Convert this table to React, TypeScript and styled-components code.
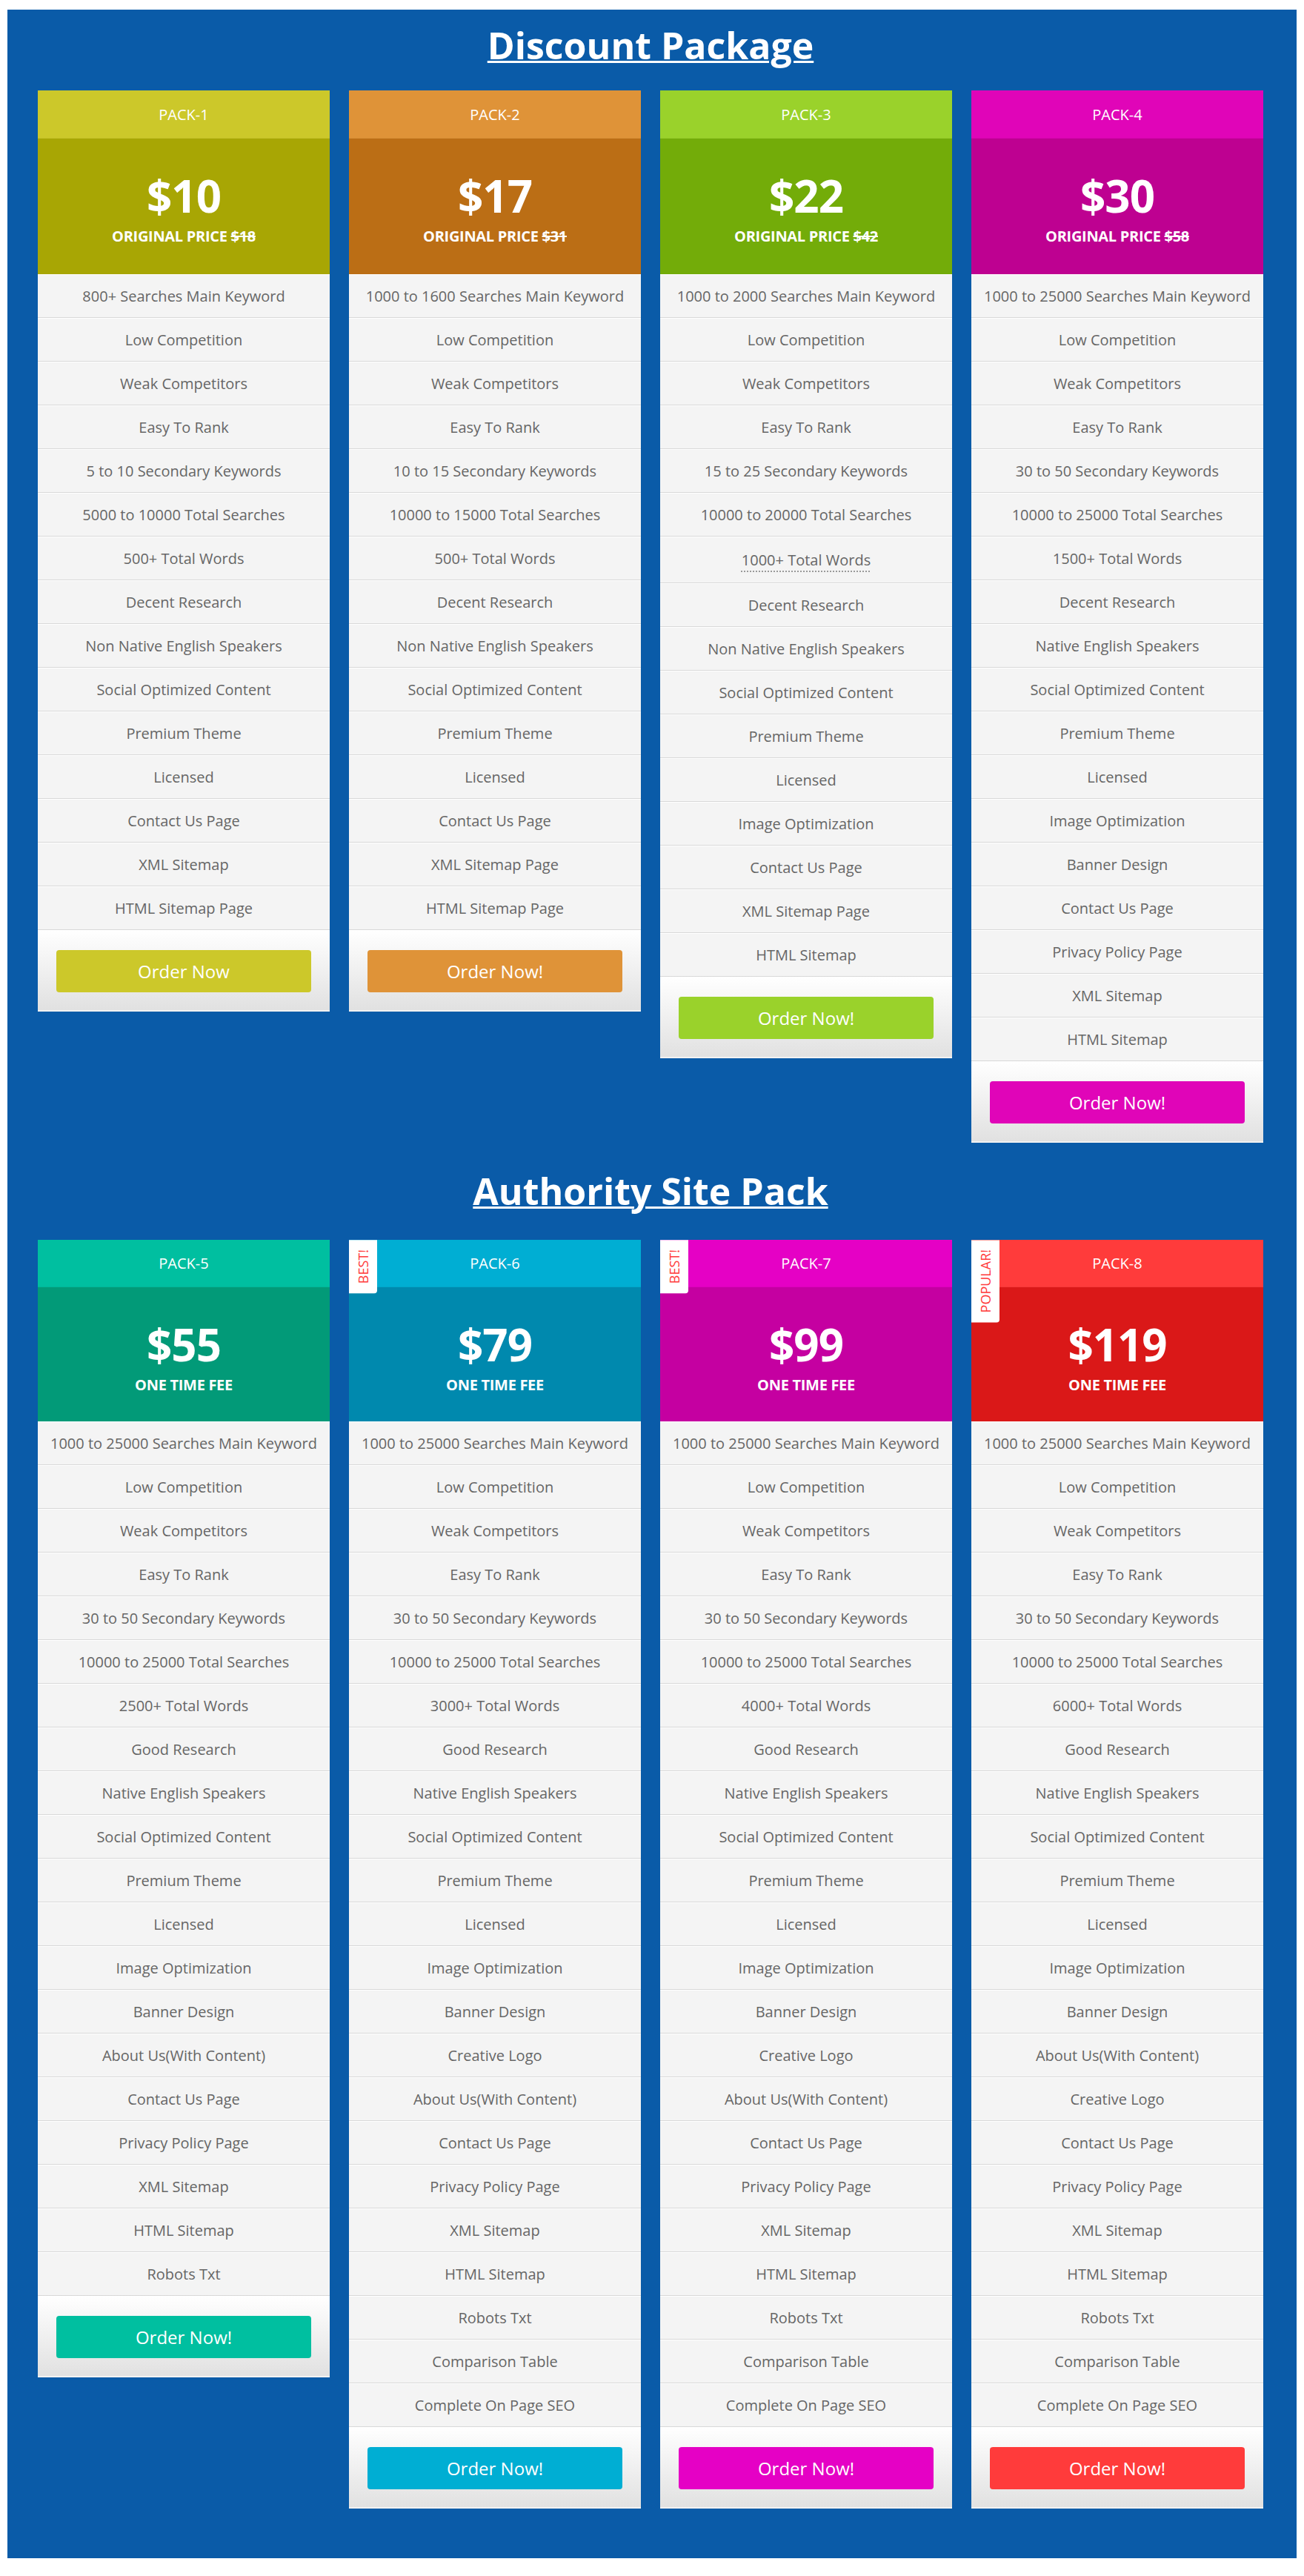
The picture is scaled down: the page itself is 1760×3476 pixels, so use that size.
import React from "react";
import styled, { createGlobalStyle } from "styled-components";

type Feature = string | { text: string; dotted: boolean };

interface Pack {
  name: string;
  head: string;
  body: string;
  price: string;
  original?: string;
  features: Feature[];
  button: string;
  badge?: string;
}

const GlobalStyle = createGlobalStyle`
  html, body {
    margin: 0;
    padding: 0;
    background: #ffffff;
  }
  body {
    font-family: "Open Sans", "Liberation Sans", sans-serif;
  }
  * { box-sizing: border-box; }
`;

const Page = styled.div`
  padding: 13px 10px 23px;
`;

const Panel = styled.main`
  background: #0a5ba8;
  padding: 13px 45px 67px 41px;
`;

const Section = styled.section`
  display: flex;
  flex-direction: column;
`;

const Title = styled.h2<{ $spaced?: boolean }>`
  margin: ${(p) => (p.$spaced ? "30px 0 31px" : "0 0 26px")};
  text-align: center;
  font-family: "Open Sans", "Liberation Sans", sans-serif;
  font-weight: 700;
  font-size: 50px;
  line-height: 70px;
  color: #ffffff;
  text-decoration: underline;
  text-decoration-thickness: 3px;
`;

const Grid = styled.div`
  display: grid;
  grid-template-columns: repeat(4, 394px);
  column-gap: 26px;
  align-items: start;
`;

const Card = styled.article`
  position: relative;
  display: flex;
  flex-direction: column;
  background: #f4f4f4;
`;

const Badge = styled.span`
  position: absolute;
  top: 0;
  left: 0;
  z-index: 2;
  width: 38px;
  padding: 13px 0;
  background: #ffffff;
  border-top-left-radius: 4px;
  color: #ff3b3b;
  font-family: "Open Sans", "Liberation Sans", sans-serif;
  font-size: 18px;
  line-height: 38px;
  writing-mode: vertical-rl;
  transform: rotate(180deg);
`;

const Header = styled.header<{ $color: string; $compact?: boolean }>`
  height: ${(p) => (p.$compact ? "64px" : "65px")};
  display: flex;
  align-items: center;
  justify-content: center;
  background: ${(p) => p.$color};
  color: #ffffff;
  font-size: 20px;
  border-bottom: 1px solid rgba(0, 0, 0, 0.04);
`;

const PriceBox = styled.div<{ $color: string; $compact?: boolean }>`
  height: ${(p) => (p.$compact ? "181px" : "183px")};
  padding-top: 47px;
  display: flex;
  flex-direction: column;
  align-items: center;
  background: ${(p) => p.$color};
  color: #ffffff;
`;

const Price = styled.div`
  font-weight: 700;
  font-size: 60px;
  line-height: 60px;
  letter-spacing: -1px;
`;

const Sub = styled.div`
  margin-top: 13px;
  font-weight: 700;
  font-size: 20px;
  line-height: 24px;
  text-transform: uppercase;
  letter-spacing: -0.3px;
`;

const Strike = styled.del`
  text-decoration: line-through;
`;

const Features = styled.ul`
  list-style: none;
  margin: 0;
  padding: 0;
`;

const Row = styled.li<{ $tall?: boolean }>`
  height: ${(p) => (p.$tall ? "63px" : "59px")};
  display: flex;
  align-items: center;
  justify-content: center;
  background: #f4f4f4;
  color: #666666;
  font-size: 20px;
  white-space: nowrap;
  border-bottom: 1px solid #d8d8d8;
  box-shadow: inset 0 1px 0 #ffffff;
`;

const Dotted = styled.span`
  text-decoration: underline dotted #9a9a9a;
  text-underline-offset: 8px;
  text-decoration-thickness: 2px;
`;

const Footer = styled.footer`
  height: 110px;
  padding: 27px 25px 0;
  background: linear-gradient(#ffffff, #e1e1e1);
  border-bottom: 2px solid #f2f2f2;
`;

const OrderButton = styled.button<{ $color: string }>`
  display: block;
  width: 100%;
  height: 57px;
  border: 0;
  border-radius: 4px;
  background: ${(p) => p.$color};
  color: #ffffff;
  font-family: "Open Sans", "Liberation Sans", sans-serif;
  font-size: 24px;
  cursor: pointer;
`;

const base = ["Low Competition", "Weak Competitors", "Easy To Rank"];

const discount: Pack[] = [
  {
    name: "PACK-1",
    head: "#ccc82a",
    body: "#a8a604",
    price: "$10",
    original: "$18",
    button: "Order Now",
    features: [
      "800+ Searches Main Keyword",
      ...base,
      "5 to 10 Secondary Keywords",
      "5000 to 10000 Total Searches",
      "500+ Total Words",
      "Decent Research",
      "Non Native English Speakers",
      "Social Optimized Content",
      "Premium Theme",
      "Licensed",
      "Contact Us Page",
      "XML Sitemap",
      "HTML Sitemap Page",
    ],
  },
  {
    name: "PACK-2",
    head: "#df9338",
    body: "#bb6e15",
    price: "$17",
    original: "$31",
    button: "Order Now!",
    features: [
      "1000 to 1600 Searches Main Keyword",
      ...base,
      "10 to 15 Secondary Keywords",
      "10000 to 15000 Total Searches",
      "500+ Total Words",
      "Decent Research",
      "Non Native English Speakers",
      "Social Optimized Content",
      "Premium Theme",
      "Licensed",
      "Contact Us Page",
      "XML Sitemap Page",
      "HTML Sitemap Page",
    ],
  },
  {
    name: "PACK-3",
    head: "#9ad22b",
    body: "#73ac09",
    price: "$22",
    original: "$42",
    button: "Order Now!",
    features: [
      "1000 to 2000 Searches Main Keyword",
      ...base,
      "15 to 25 Secondary Keywords",
      "10000 to 20000 Total Searches",
      { text: "1000+ Total Words", dotted: true },
      "Decent Research",
      "Non Native English Speakers",
      "Social Optimized Content",
      "Premium Theme",
      "Licensed",
      "Image Optimization",
      "Contact Us Page",
      "XML Sitemap Page",
      "HTML Sitemap",
    ],
  },
  {
    name: "PACK-4",
    head: "#e005b8",
    body: "#be0191",
    price: "$30",
    original: "$58",
    button: "Order Now!",
    features: [
      "1000 to 25000 Searches Main Keyword",
      ...base,
      "30 to 50 Secondary Keywords",
      "10000 to 25000 Total Searches",
      "1500+ Total Words",
      "Decent Research",
      "Native English Speakers",
      "Social Optimized Content",
      "Premium Theme",
      "Licensed",
      "Image Optimization",
      "Banner Design",
      "Contact Us Page",
      "Privacy Policy Page",
      "XML Sitemap",
      "HTML Sitemap",
    ],
  },
];

const authStart = (words: string) => [
  "1000 to 25000 Searches Main Keyword",
  ...base,
  "30 to 50 Secondary Keywords",
  "10000 to 25000 Total Searches",
  words,
  "Good Research",
  "Native English Speakers",
  "Social Optimized Content",
  "Premium Theme",
  "Licensed",
  "Image Optimization",
  "Banner Design",
];

const authority: Pack[] = [
  {
    name: "PACK-5",
    head: "#00bfa0",
    body: "#029a78",
    price: "$55",
    button: "Order Now!",
    features: [
      ...authStart("2500+ Total Words"),
      "About Us(With Content)",
      "Contact Us Page",
      "Privacy Policy Page",
      "XML Sitemap",
      "HTML Sitemap",
      "Robots Txt",
    ],
  },
  {
    name: "PACK-6",
    head: "#00aed3",
    body: "#0089ae",
    price: "$79",
    badge: "BEST!",
    button: "Order Now!",
    features: [
      ...authStart("3000+ Total Words"),
      "Creative Logo",
      "About Us(With Content)",
      "Contact Us Page",
      "Privacy Policy Page",
      "XML Sitemap",
      "HTML Sitemap",
      "Robots Txt",
      "Comparison Table",
      "Complete On Page SEO",
    ],
  },
  {
    name: "PACK-7",
    head: "#e501c5",
    body: "#c500a1",
    price: "$99",
    badge: "BEST!",
    button: "Order Now!",
    features: [
      ...authStart("4000+ Total Words"),
      "Creative Logo",
      "About Us(With Content)",
      "Contact Us Page",
      "Privacy Policy Page",
      "XML Sitemap",
      "HTML Sitemap",
      "Robots Txt",
      "Comparison Table",
      "Complete On Page SEO",
    ],
  },
  {
    name: "PACK-8",
    head: "#ff3b3b",
    body: "#da1818",
    price: "$119",
    badge: "POPULAR!",
    button: "Order Now!",
    features: [
      ...authStart("6000+ Total Words"),
      "About Us(With Content)",
      "Creative Logo",
      "Contact Us Page",
      "Privacy Policy Page",
      "XML Sitemap",
      "HTML Sitemap",
      "Robots Txt",
      "Comparison Table",
      "Complete On Page SEO",
    ],
  },
];

function PriceCard({ pack, compact }: { pack: Pack; compact?: boolean }) {
  return (
    <Card>
      {pack.badge && <Badge>{pack.badge}</Badge>}
      <Header $color={pack.head} $compact={compact}>
        {pack.name}
      </Header>
      <PriceBox $color={pack.body} $compact={compact}>
        <Price>{pack.price}</Price>
        <Sub>
          {pack.original ? (
            <>
              Original Price <Strike>{pack.original}</Strike>
            </>
          ) : (
            "One Time Fee"
          )}
        </Sub>
      </PriceBox>
      <Features>
        {pack.features.map((f, i) =>
          typeof f === "string" ? (
            <Row key={i}>{f}</Row>
          ) : (
            <Row key={i} $tall>
              <Dotted>{f.text}</Dotted>
            </Row>
          )
        )}
      </Features>
      <Footer>
        <OrderButton $color={pack.head}>{pack.button}</OrderButton>
      </Footer>
    </Card>
  );
}

export default function App() {
  return (
    <>
      <GlobalStyle />
      <Page>
        <Panel>
          <Section>
            <Title>Discount Package</Title>
            <Grid>
              {discount.map((p) => (
                <PriceCard key={p.name} pack={p} />
              ))}
            </Grid>
          </Section>
          <Section>
            <Title $spaced>Authority Site Pack</Title>
            <Grid>
              {authority.map((p) => (
                <PriceCard key={p.name} pack={p} compact />
              ))}
            </Grid>
          </Section>
        </Panel>
      </Page>
    </>
  );
}
